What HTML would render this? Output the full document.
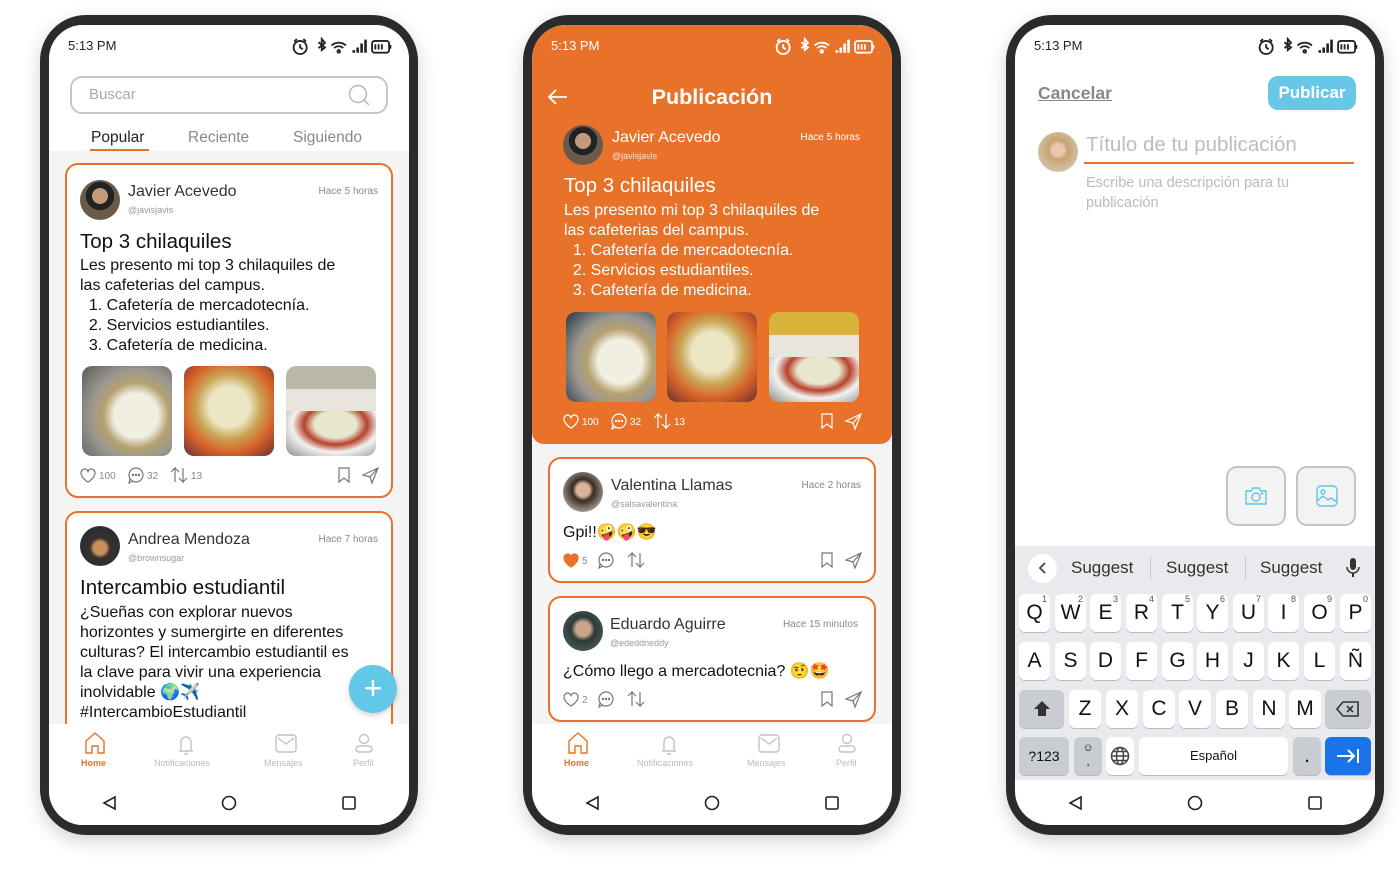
<!DOCTYPE html>
<html><head><meta charset="utf-8"><style>
*{margin:0;padding:0;box-sizing:border-box}
body{width:1400px;height:874px;background:#fff;position:relative;overflow:hidden;font-family:"Liberation Sans","Noto Sans CJK JP",sans-serif;color:#111}
.a{position:absolute}
.ph{position:absolute;top:15px;width:378px;height:820px;background:#2a2b2d;border-radius:46px;box-shadow:0 6px 18px rgba(0,0,0,.18)}
.scr{position:absolute;left:9px;top:10px;width:360px;height:800px;border-radius:34px;overflow:hidden;background:#fff}
.t{position:absolute;white-space:nowrap}
.card{position:absolute;background:#fff;border:2.5px solid #e9722a;border-radius:13px}
.av{position:absolute;width:40px;height:40px;border-radius:50%}
.img{position:absolute;width:90px;height:90px;border-radius:10px}
.nm{font-size:16px;color:#333}
.hd{font-size:9px;color:#9a9a9a}
.tm{font-size:10px;color:#888}
.body{font-size:16px;line-height:20px}
.key{position:absolute;background:#fff;border-radius:6px;box-shadow:0 1px 0 #b8bcc2;font-size:21px;text-align:center;line-height:38px;height:38px;color:#111}
.key sup{position:absolute;right:3px;top:-14px;font-size:9px;color:#555}
.gk{background:#c9ccd1}
</style></head><body>

<svg width="0" height="0" style="position:absolute">
<defs>
<g id="st" fill="none" stroke-width="1.4">
 <circle cx="7" cy="8" r="5"/><path d="M7 5.5V8l2 1.3M2.5 3.5l2-2M11.5 3.5l-2-2"/>
 <path d="M21 4l5 4-2.5 2V1.5L26 4.5l-5 4" />
 <path d="M31 6.5a8 8 0 0 1 11 0M33 8.5a5 5 0 0 1 7 0"/><circle cx="36.5" cy="11" r="1"/>
 <path d="M48 12v-2M51 12V8M54 12V5M57 12V2" stroke-width="2"/>
 <rect x="62" y="3" width="13" height="9" rx="2"/><path d="M76 6v3M64.5 5.5v4M67 5.5v4M69.5 5.5v4"/>
</g>
</defs></svg>

<!-- ============ PHONE 1 ============ -->
<div class="ph" style="left:40px"><div class="scr" style="background:#f4f4f4">
 <div class="a" style="left:0;top:0;width:360px;height:126px;background:#fff"></div>
 <div class="t" style="left:19px;top:13px;font-size:13px;color:#222">5:13 PM</div>
 <svg class="a" style="left:242px;top:12px" width="102" height="19" viewBox="0 0 78 14.5" stroke="#222"><use href="#st"/></svg>
 <div class="a" style="left:21px;top:51px;width:318px;height:38px;border:2px solid #c6c6c6;border-radius:12px"></div>
 <div class="t" style="left:40px;top:61px;font-size:15px;color:#aaa">Buscar</div>
 <svg class="a" style="left:299px;top:59px" width="24" height="24" fill="none" stroke="#b5b5b5" stroke-width="1.4"><circle cx="10" cy="10" r="8.5"/><path d="M16 16l5 5"/></svg>
 <div class="t" style="left:42px;top:104px;font-size:15.5px;color:#222">Popular</div>
 <div class="a" style="left:41px;top:124px;width:59px;height:2px;background:#e9722a"></div>
 <div class="t" style="left:139px;top:104px;font-size:15.5px;color:#888">Reciente</div>
 <div class="t" style="left:244px;top:104px;font-size:15.5px;color:#888">Siguiendo</div>

 <div class="card" style="left:16px;top:138px;width:328px;height:335px">
  <div class="av" style="left:13px;top:15px;background:radial-gradient(circle at 50% 40%,#c49a7e 0 25%,#222 26% 45%,#6a5a4a 46%)"></div>
  <div class="t nm" style="left:61px;top:18px">Javier Acevedo</div>
  <div class="t hd" style="left:61px;top:40px">@javisjavis</div>
  <div class="t tm" style="right:13px;top:21px">Hace 5 horas</div>
  <div class="t" style="left:13px;top:65px;font-size:20.5px">Top 3 chilaquiles</div>
  <div class="a body" style="left:13px;top:91px;width:310px">Les presento mi top 3 chilaquiles de<br>las cafeterias del campus.<br>&nbsp;&nbsp;1. Cafetería de mercadotecnía.<br>&nbsp;&nbsp;2. Servicios estudiantiles.<br>&nbsp;&nbsp;3. Cafetería de medicina.</div>
  <div class="img" style="left:15px;top:201px;background:radial-gradient(circle at 60% 55%,#f1eee2 0 30%,#b5a170 45%,#9a9890 62%,#5a5a58)"></div>
  <div class="img" style="left:117px;top:201px;background:radial-gradient(circle at 50% 45%,#ece6c4 0 30%,#c9a455 48%,#d9642a 68%,#6a3030)"></div>
  <div class="img" style="left:219px;top:201px;background:linear-gradient(180deg,#b8b7a8 0 25%,#e9e5dc 26%)"></div>
  <div class="a" style="left:219px;top:246px;width:90px;height:45px;border-radius:0 0 10px 10px;background:radial-gradient(ellipse at 55% 30%,#e8e6cf 0 30%,#b7412a 45%,#f2f2f2 62%,#8a8a85)"></div>
  <svg class="a" style="left:12px;top:300px" width="300" height="20" fill="none" stroke="#777" stroke-width="1.2">
   <path d="M9 17s-7-4-7-9a3.6 3.6 0 0 1 7-1.5A3.6 3.6 0 0 1 16 8c0 5-7 9-7 9z"/>
   <text x="20" y="14" font-size="10" fill="#888" stroke="none" font-family="Liberation Sans">100</text>
   <circle cx="57" cy="10" r="7"/><path d="M51 14l-1 4 4-2" /><circle cx="54" cy="10" r=".6" fill="#777"/><circle cx="57" cy="10" r=".6" fill="#777"/><circle cx="60" cy="10" r=".6" fill="#777"/>
   <text x="68" y="14" font-size="10" fill="#888" stroke="none" font-family="Liberation Sans">32</text>
   <path d="M96 17V3l-4 4M96 3l4 4M104 3v14l-4-4M104 17l4-4"/>
   <text x="112" y="14" font-size="10" fill="#888" stroke="none" font-family="Liberation Sans">13</text>
   <path d="M260 3h10v14l-5-4-5 4z"/>
   <path d="M284 10l15-7-6 15-2-6z M291 12l8-9"/>
  </svg>
 </div>

 <div class="card" style="left:16px;top:486px;width:328px;height:320px">
  <div class="av" style="left:13px;top:13px;background:radial-gradient(circle at 50% 55%,#c8915a 0 22%,#3a3030 34%,#1e2a36)"></div>
  <div class="t nm" style="left:61px;top:18px">Andrea Mendoza</div>
  <div class="t hd" style="left:61px;top:40px">@brownsugar</div>
  <div class="t tm" style="right:13px;top:21px">Hace 7 horas</div>
  <div class="t" style="left:13px;top:63px;font-size:20.5px">Intercambio estudiantil</div>
  <div class="a body" style="left:13px;top:90px;width:310px">¿Sueñas con explorar nuevos<br>horizontes y sumergirte en diferentes<br>culturas? El intercambio estudiantil es<br>la clave para vivir una experiencia<br>inolvidable 🌍✈️<br>#IntercambioEstudiantil</div>
 </div>
 <div class="a" style="left:300px;top:640px;width:48px;height:48px;border-radius:50%;background:#63c7e7;box-shadow:0 2px 6px rgba(0,0,0,.2);color:#fff;font-size:32px;line-height:46px;text-align:center">+</div>

 <div class="a" style="left:0;top:699px;width:360px;height:101px;background:#fff"></div>
 <svg class="a" style="left:0;top:699px" width="360" height="40" fill="none" stroke-width="1.4">
  <path d="M37 29V17l9-8 9 8v12h-6v-7h-6v7z" stroke="#e9722a"/>
  <path d="M130 27h14M132 26v-8a5 5 0 0 1 10 0v8M135 30h4" stroke="#c2c2c2"/>
  <rect x="227" y="11" width="20" height="17" rx="3" stroke="#c2c2c2"/><path d="M229 14l8 6 8-6" stroke="#c2c2c2"/>
  <circle cx="315" cy="15" r="4.5" stroke="#c2c2c2"/><rect x="307" y="22" width="16" height="6" rx="3" stroke="#c2c2c2"/>
 </svg>
 <div class="t" style="left:32px;top:733px;font-size:9px;font-weight:bold;color:#e9722a">Home</div>
 <div class="t" style="left:105px;top:733px;font-size:9px;color:#bbb">Notificaciones</div>
 <div class="t" style="left:215px;top:733px;font-size:9px;color:#bbb">Mensajes</div>
 <div class="t" style="left:304px;top:733px;font-size:9px;color:#bbb">Perfil</div>
 <svg class="a" style="left:0;top:765px" width="360" height="25" fill="none" stroke="#222" stroke-width="1.6">
  <path d="M66 7l-11 6 11 6z"/><circle cx="180" cy="13" r="6.5"/><rect x="294" y="7" width="12" height="12" rx="1.5"/>
 </svg>
</div></div>

<!-- ============ PHONE 2 ============ -->
<div class="ph" style="left:523px"><div class="scr" style="background:#f4f4f4">
 <div class="a" style="left:0;top:0;width:360px;height:419px;background:#e9722a;border-radius:0 0 12px 12px"></div>
 <div class="t" style="left:19px;top:13px;font-size:13px;color:#fff">5:13 PM</div>
 <svg class="a" style="left:242px;top:12px" width="102" height="19" viewBox="0 0 78 14.5" stroke="#fff"><use href="#st"/></svg>
 <svg class="a" style="left:14px;top:63px" width="24" height="18" fill="none" stroke="#fff" stroke-width="1.8"><path d="M21 9H3M10 2L3 9l7 7"/></svg>
 <div class="t" style="left:0;width:360px;text-align:center;top:60px;font-size:21.5px;font-weight:bold;color:#fff">Publicación</div>
 <div class="av" style="left:31px;top:100px;background:radial-gradient(circle at 50% 40%,#c49a7e 0 25%,#222 26% 45%,#6a5a4a 46%)"></div>
 <div class="t nm" style="left:80px;top:104px;color:#fff">Javier Acevedo</div>
 <div class="t hd" style="left:80px;top:126px;color:#fde0cc">@javisjavis</div>
 <div class="t tm" style="right:32px;top:107px;color:#fff">Hace 5 horas</div>
 <div class="t" style="left:32px;top:149px;font-size:20.5px;color:#fff">Top 3 chilaquiles</div>
 <div class="a body" style="left:32px;top:176px;width:310px;color:#fff">Les presento mi top 3 chilaquiles de<br>las cafeterias del campus.<br>&nbsp;&nbsp;1. Cafetería de mercadotecnía.<br>&nbsp;&nbsp;2. Servicios estudiantiles.<br>&nbsp;&nbsp;3. Cafetería de medicina.</div>
 <div class="img" style="left:34px;top:287px;background:radial-gradient(circle at 60% 55%,#f1eee2 0 30%,#b5a170 45%,#9a9890 62%,#24324a)"></div>
 <div class="img" style="left:135px;top:287px;background:radial-gradient(circle at 50% 45%,#ece6c4 0 30%,#c9a455 48%,#d9642a 68%,#6a3030)"></div>
 <div class="img" style="left:237px;top:287px;background:linear-gradient(180deg,#d8b23a 0 25%,#e9e5dc 26%)"></div>
 <div class="a" style="left:237px;top:332px;width:90px;height:45px;border-radius:0 0 10px 10px;background:radial-gradient(ellipse at 55% 30%,#e8e6cf 0 30%,#b7412a 45%,#f2f2f2 62%,#8a8a85)"></div>
 <svg class="a" style="left:30px;top:386px" width="300" height="20" fill="none" stroke="#fff" stroke-width="1.2">
  <path d="M9 17s-7-4-7-9a3.6 3.6 0 0 1 7-1.5A3.6 3.6 0 0 1 16 8c0 5-7 9-7 9z"/>
  <text x="20" y="14" font-size="10" fill="#fff" stroke="none" font-family="Liberation Sans">100</text>
  <circle cx="57" cy="10" r="7"/><path d="M51 14l-1 4 4-2"/><circle cx="54" cy="10" r=".6" fill="#fff"/><circle cx="57" cy="10" r=".6" fill="#fff"/><circle cx="60" cy="10" r=".6" fill="#fff"/>
  <text x="68" y="14" font-size="10" fill="#fff" stroke="none" font-family="Liberation Sans">32</text>
  <path d="M96 17V3l-4 4M96 3l4 4M104 3v14l-4-4M104 17l4-4"/>
  <text x="112" y="14" font-size="10" fill="#fff" stroke="none" font-family="Liberation Sans">13</text>
  <path d="M260 3h10v14l-5-4-5 4z"/>
  <path d="M284 10l15-7-6 15-2-6z M291 12l8-9"/>
 </svg>

 <div class="card" style="left:16px;top:432px;width:328px;height:126px">
  <div class="av" style="left:13px;top:13px;background:radial-gradient(circle at 50% 45%,#d8b49a 0 22%,#3a2a22 36%,#e6e3de)"></div>
  <div class="t nm" style="left:61px;top:18px">Valentina Llamas</div>
  <div class="t hd" style="left:61px;top:40px">@salsavalentina</div>
  <div class="t tm" style="right:13px;top:21px">Hace 2 horas</div>
  <div class="t" style="left:13px;top:63px;font-size:16px">Gpi!!🤪🤪😎</div>
  <svg class="a" style="left:12px;top:91px" width="300" height="20" fill="none" stroke="#777" stroke-width="1.2">
   <path d="M9 17s-7-4-7-9a3.6 3.6 0 0 1 7-1.5A3.6 3.6 0 0 1 16 8c0 5-7 9-7 9z" fill="#e9722a" stroke="#e9722a"/>
   <text x="20" y="14" font-size="10" fill="#888" stroke="none" font-family="Liberation Sans">5</text>
   <circle cx="44" cy="10" r="7"/><path d="M38 14l-1 4 4-2"/><circle cx="41" cy="10" r=".6" fill="#777"/><circle cx="44" cy="10" r=".6" fill="#777"/><circle cx="47" cy="10" r=".6" fill="#777"/>
   <path d="M70 17V3l-4 4M70 3l4 4M78 3v14l-4-4M78 17l4-4"/>
   <path d="M260 3h10v14l-5-4-5 4z"/>
   <path d="M284 10l15-7-6 15-2-6z M291 12l8-9"/>
  </svg>
 </div>
 <div class="card" style="left:16px;top:571px;width:328px;height:126px">
  <div class="av" style="left:13px;top:13px;background:radial-gradient(circle at 50% 45%,#c9a58a 0 24%,#2d3a3a 40%,#5a6a66)"></div>
  <div class="t nm" style="left:60px;top:18px">Eduardo Aguirre</div>
  <div class="t hd" style="left:60px;top:40px">@ededdneddy</div>
  <div class="t tm" style="right:16px;top:21px">Hace 15 minutos</div>
  <div class="t" style="left:13px;top:63px;font-size:16px">¿Cómo llego a mercadotecnia? 🤨🤩</div>
  <svg class="a" style="left:12px;top:91px" width="300" height="20" fill="none" stroke="#777" stroke-width="1.2">
   <path d="M9 17s-7-4-7-9a3.6 3.6 0 0 1 7-1.5A3.6 3.6 0 0 1 16 8c0 5-7 9-7 9z"/>
   <text x="20" y="14" font-size="10" fill="#888" stroke="none" font-family="Liberation Sans">2</text>
   <circle cx="44" cy="10" r="7"/><path d="M38 14l-1 4 4-2"/><circle cx="41" cy="10" r=".6" fill="#777"/><circle cx="44" cy="10" r=".6" fill="#777"/><circle cx="47" cy="10" r=".6" fill="#777"/>
   <path d="M70 17V3l-4 4M70 3l4 4M78 3v14l-4-4M78 17l4-4"/>
   <path d="M260 3h10v14l-5-4-5 4z"/>
   <path d="M284 10l15-7-6 15-2-6z M291 12l8-9"/>
  </svg>
 </div>

 <div class="a" style="left:0;top:699px;width:360px;height:101px;background:#fff"></div>
 <svg class="a" style="left:0;top:699px" width="360" height="40" fill="none" stroke-width="1.4">
  <path d="M37 29V17l9-8 9 8v12h-6v-7h-6v7z" stroke="#e9722a"/>
  <path d="M130 27h14M132 26v-8a5 5 0 0 1 10 0v8M135 30h4" stroke="#c2c2c2"/>
  <rect x="227" y="11" width="20" height="17" rx="3" stroke="#c2c2c2"/><path d="M229 14l8 6 8-6" stroke="#c2c2c2"/>
  <circle cx="315" cy="15" r="4.5" stroke="#c2c2c2"/><rect x="307" y="22" width="16" height="6" rx="3" stroke="#c2c2c2"/>
 </svg>
 <div class="t" style="left:32px;top:733px;font-size:9px;font-weight:bold;color:#e9722a">Home</div>
 <div class="t" style="left:105px;top:733px;font-size:9px;color:#bbb">Notificaciones</div>
 <div class="t" style="left:215px;top:733px;font-size:9px;color:#bbb">Mensajes</div>
 <div class="t" style="left:304px;top:733px;font-size:9px;color:#bbb">Perfil</div>
 <svg class="a" style="left:0;top:765px" width="360" height="25" fill="none" stroke="#222" stroke-width="1.6">
  <path d="M66 7l-11 6 11 6z"/><circle cx="180" cy="13" r="6.5"/><rect x="294" y="7" width="12" height="12" rx="1.5"/>
 </svg>
</div></div>

<!-- ============ PHONE 3 ============ -->
<div class="ph" style="left:1006px"><div class="scr">
 <div class="t" style="left:19px;top:13px;font-size:13px;color:#222">5:13 PM</div>
 <svg class="a" style="left:242px;top:12px" width="102" height="19" viewBox="0 0 78 14.5" stroke="#222"><use href="#st"/></svg>
 <div class="t" style="left:23px;top:58px;font-size:17.5px;font-weight:bold;color:#888;text-decoration:underline">Cancelar</div>
 <div class="a" style="left:253px;top:51px;width:88px;height:34px;border-radius:10px;background:#66c7e7;color:#fff;font-weight:bold;font-size:17px;text-align:center;line-height:34px">Publicar</div>
 <div class="av" style="left:23px;top:107px;background:radial-gradient(circle at 50% 45%,#e8c9ae 0 20%,#c9a36e 32%,#d8d6d2)"></div>
 <div class="t" style="left:71px;top:108px;font-size:20.5px;color:#bdbdbd">Título de tu publicación</div>
 <div class="a" style="left:69px;top:137px;width:270px;height:2px;background:#e9722a"></div>
 <div class="a" style="left:71px;top:148px;font-size:14.5px;line-height:20px;color:#bbb">Escribe una descripción para tu<br>publicación</div>
 <div class="a" style="left:211px;top:441px;width:60px;height:60px;border:2px solid #c4c4c4;border-radius:11px;background:#f3f3f3"></div>
 <div class="a" style="left:281px;top:441px;width:60px;height:60px;border:2px solid #c4c4c4;border-radius:11px;background:#f3f3f3"></div>
 <svg class="a" style="left:228px;top:459px" width="26" height="24" fill="none" stroke="#5fc3e6" stroke-width="1.4"><path d="M3 7h5l2-3h6l2 3h5v13H3z"/><circle cx="13" cy="13" r="4"/><circle cx="19" cy="9.5" r=".6"/></svg>
 <svg class="a" style="left:300px;top:459px" width="24" height="24" fill="none" stroke="#5fc3e6" stroke-width="1.4"><rect x="2" y="2" width="20" height="20" rx="4"/><circle cx="8" cy="8" r="2"/><path d="M2 17l6-5 5 4 3-2 6 4"/></svg>

 <div class="a" style="left:0;top:521px;width:360px;height:234px;background:#e8eaed"></div>
 <div class="a" style="left:13px;top:529px;width:29px;height:29px;border-radius:50%;background:#fff"></div>
 <svg class="a" style="left:21px;top:536px" width="14" height="14" fill="none" stroke="#444" stroke-width="1.8"><path d="M9 2L4 7l5 5"/></svg>
 <div class="t" style="left:56px;top:533px;font-size:17px;color:#333">Suggest</div>
 <div class="a" style="left:135px;top:531px;width:1px;height:24px;background:#ccc"></div>
 <div class="t" style="left:151px;top:533px;font-size:17px;color:#333">Suggest</div>
 <div class="a" style="left:230px;top:531px;width:1px;height:24px;background:#ccc"></div>
 <div class="t" style="left:245px;top:533px;font-size:17px;color:#333">Suggest</div>
 <svg class="a" style="left:331px;top:533px" width="14" height="20" fill="#333"><rect x="4" y="0" width="6" height="12" rx="3"/><path d="M1 9a6 6 0 0 0 12 0" fill="none" stroke="#333" stroke-width="1.5"/><rect x="6" y="15" width="2" height="4"/></svg>

 <div class="key" style="left:4px;top:569px;width:31px">Q<sup>1</sup></div>
 <div class="key" style="left:40px;top:569px;width:31px">W<sup>2</sup></div>
 <div class="key" style="left:75px;top:569px;width:31px">E<sup>3</sup></div>
 <div class="key" style="left:111px;top:569px;width:31px">R<sup>4</sup></div>
 <div class="key" style="left:147px;top:569px;width:31px">T<sup>5</sup></div>
 <div class="key" style="left:182px;top:569px;width:31px">Y<sup>6</sup></div>
 <div class="key" style="left:218px;top:569px;width:31px">U<sup>7</sup></div>
 <div class="key" style="left:253px;top:569px;width:31px">I<sup>8</sup></div>
 <div class="key" style="left:289px;top:569px;width:31px">O<sup>9</sup></div>
 <div class="key" style="left:325px;top:569px;width:31px">P<sup>0</sup></div>

 <div class="key" style="left:4px;top:617px;width:31px">A</div>
 <div class="key" style="left:40px;top:617px;width:31px">S</div>
 <div class="key" style="left:75px;top:617px;width:31px">D</div>
 <div class="key" style="left:111px;top:617px;width:31px">F</div>
 <div class="key" style="left:147px;top:617px;width:31px">G</div>
 <div class="key" style="left:182px;top:617px;width:31px">H</div>
 <div class="key" style="left:218px;top:617px;width:31px">J</div>
 <div class="key" style="left:253px;top:617px;width:31px">K</div>
 <div class="key" style="left:289px;top:617px;width:31px">L</div>
 <div class="key" style="left:325px;top:617px;width:31px">Ñ</div>

 <div class="key gk" style="left:4px;top:665px;width:45px"><svg width="20" height="20" style="margin-top:9px" fill="#333"><path d="M10 2l8 8h-4v7H6v-7H2z"/></svg></div>
 <div class="key" style="left:54px;top:665px;width:32px">Z</div>
 <div class="key" style="left:91px;top:665px;width:32px">X</div>
 <div class="key" style="left:128px;top:665px;width:32px">C</div>
 <div class="key" style="left:164px;top:665px;width:32px">V</div>
 <div class="key" style="left:201px;top:665px;width:32px">B</div>
 <div class="key" style="left:238px;top:665px;width:32px">N</div>
 <div class="key" style="left:274px;top:665px;width:32px">M</div>
 <div class="key gk" style="left:310px;top:665px;width:46px"><svg width="24" height="18" style="margin-top:10px" fill="none" stroke="#333" stroke-width="1.6"><path d="M7 2h15v14H7L1 9z"/><path d="M11 6l6 6M17 6l-6 6"/></svg></div>

 <div class="key gk" style="left:4px;top:712px;width:50px;font-size:14px">?123</div>
 <div class="key gk" style="left:59px;top:712px;width:28px;font-size:11px;line-height:14px;padding-top:4px">☺<br>,</div>
 <div class="key" style="left:91px;top:712px;width:28px"><svg width="20" height="20" style="margin-top:9px" fill="none" stroke="#444" stroke-width="1.5"><circle cx="10" cy="10" r="8.5"/><ellipse cx="10" cy="10" rx="3.5" ry="8.5"/><path d="M1.5 10h17M3 5.5h14M3 14.5h14"/></svg></div>
 <div class="key" style="left:124px;top:712px;width:149px;font-size:13px">Español</div>
 <div class="key gk" style="left:278px;top:712px;width:28px">.</div>
 <div class="key" style="left:310px;top:712px;width:46px;background:#1a73e8"><svg width="24" height="16" style="margin-top:11px" fill="none" stroke="#fff" stroke-width="2"><path d="M1 8h17M12 2l6 6-6 6M22 1v14"/></svg></div>

 <svg class="a" style="left:0;top:765px" width="360" height="25" fill="none" stroke="#222" stroke-width="1.6">
  <path d="M66 7l-11 6 11 6z"/><circle cx="180" cy="13" r="6.5"/><rect x="294" y="7" width="12" height="12" rx="1.5"/>
 </svg>
</div></div>
</body></html>
